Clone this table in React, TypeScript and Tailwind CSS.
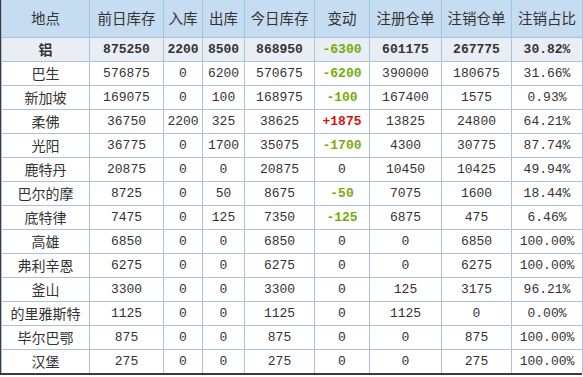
const cols = [88, 74, 39, 42, 70, 55, 72, 70, 71];

const headers = ["地点", "前日库存", "入库", "出库", "今日库存", "变动", "注册仓单", "注销仓单", "注销占比"];

type Row = [string, string, string, string, string, string, string, string, string];

const total: Row = ["铝", "875250", "2200", "8500", "868950", "-6300", "601175", "267775", "30.82%"];

const rows: Row[] = [
  ["巴生", "576875", "0", "6200", "570675", "-6200", "390000", "180675", "31.66%"],
  ["新加坡", "169075", "0", "100", "168975", "-100", "167400", "1575", "0.93%"],
  ["柔佛", "36750", "2200", "325", "38625", "+1875", "13825", "24800", "64.21%"],
  ["光阳", "36775", "0", "1700", "35075", "-1700", "4300", "30775", "87.74%"],
  ["鹿特丹", "20875", "0", "0", "20875", "0", "10450", "10425", "49.94%"],
  ["巴尔的摩", "8725", "0", "50", "8675", "-50", "7075", "1600", "18.44%"],
  ["底特律", "7475", "0", "125", "7350", "-125", "6875", "475", "6.46%"],
  ["高雄", "6850", "0", "0", "6850", "0", "0", "6850", "100.00%"],
  ["弗利辛恩", "6275", "0", "0", "6275", "0", "0", "6275", "100.00%"],
  ["釜山", "3300", "0", "0", "3300", "0", "125", "3175", "96.21%"],
  ["的里雅斯特", "1125", "0", "0", "1125", "0", "1125", "0", "0.00%"],
  ["毕尔巴鄂", "875", "0", "0", "875", "0", "0", "875", "100.00%"],
  ["汉堡", "275", "0", "0", "275", "0", "0", "275", "100.00%"],
];

const cjk = "font-['Noto_Sans_CJK_SC',sans-serif]";
const mono = "font-['Liberation_Mono','Noto_Sans_CJK_SC',monospace]";

function changeClass(v: string) {
  if (v.startsWith("-")) return "text-[#72ad0c] font-bold";
  if (v.startsWith("+")) return "text-[#d90f0f] font-bold";
  return "";
}

export default function App() {
  return (
    <div className="w-[583px] h-[377px] bg-white overflow-hidden">
      <div className="w-[582px] border-l border-b-2 border-[#3a3a3a]">
        <table className="table-fixed border-collapse text-[#333] w-[581px]">
          <colgroup>
            {cols.map((w, i) => (
              <col key={i} style={{ width: w }} />
            ))}
          </colgroup>
          <thead>
            <tr className="h-[37px] bg-[#c6dcf1]">
              {headers.map((h) => (
                <th
                  key={h}
                  className={`${cjk} font-normal text-[14.5px] border border-[#a8c3de] border-t-0 text-center p-0 text-[#333]`}
                >
                  {h}
                </th>
              ))}
            </tr>
          </thead>
          <tbody>
            <tr className="h-[24px] bg-[#e9eef5]">
              {total.map((v, i) => (
                <td
                  key={i}
                  className={`border border-[#a8c3de] text-center p-0 font-bold leading-none ${
                    i === 0 ? `${cjk} text-[14px]` : `${mono} text-[13px]`
                  } ${i === 5 ? changeClass(v) : ""}`}
                >
                  {v}
                </td>
              ))}
            </tr>
            {rows.map((r, ri) => (
              <tr key={ri} className="h-[24px] bg-white">
                {r.map((v, i) => (
                  <td
                    key={i}
                    className={`border border-[#a8c3de] text-center p-0 leading-none ${
                      i === 0 ? `${cjk} text-[14px]` : `${mono} text-[13px]`
                    } ${i === 5 ? changeClass(v) : ""} ${ri === rows.length - 1 ? "border-b-0" : ""}`}
                  >
                    {v}
                  </td>
                ))}
              </tr>
            ))}
          </tbody>
        </table>
      </div>
    </div>
  );
}
